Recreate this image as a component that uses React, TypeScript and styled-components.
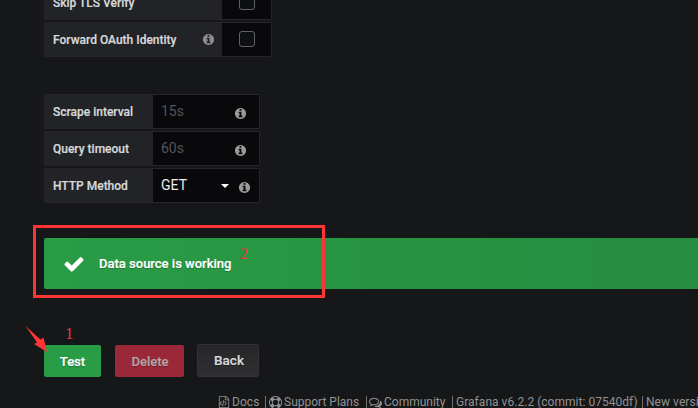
import React from 'react';
import styled, { createGlobalStyle, css } from 'styled-components';

const GlobalStyle = createGlobalStyle`
  html, body { margin: 0; background: #161719; overflow: hidden; }
  *, *::before, *::after { box-sizing: border-box; }
  body { font: 400 13px/20px Roboto, "Liberation Sans", sans-serif; color: #d8d9da; }
`;

const icons = {
  info: 'M1152 1376v-160q0-14-9-23t-23-9h-96v-512q0-14-9-23t-23-9h-320q-14 0-23 9t-9 23v160q0 14 9 23t23 9h96v320h-96q-14 0-23 9t-9 23v160q0 14 9 23t23 9h448q14 0 23-9t9-23zm-128-896v-160q0-14-9-23t-23-9h-192q-14 0-23 9t-9 23v160q0 14 9 23t23 9h192q14 0 23-9t9-23zm640 416q0 209-103 385.5t-279.5 279.5-385.5 103-385.5-103-279.5-279.5-103-385.5 103-385.5 279.5-279.5 385.5-103 385.5 103 279.5 279.5 103 385.5z',
  check: 'M1671 566q0 40-28 68l-724 724-136 136q-28 28-68 28t-68-28l-136-136-362-362q-28-28-28-68t28-68l136-136q28-28 68-28t68 28l294 295 656-657q28-28 68-28t68 28l136 136q28 28 28 68z',
  docs: 'M1596 380q28 28 48 76t20 88v1152q0 40-28 68t-68 28h-1344q-40 0-68-28t-28-68v-1600q0-40 28-68t68-28h896q40 0 88 20t76 48zm-444-244v376h376q-10-29-22-41l-313-313q-12-12-41-22zm384 1528v-1024h-416q-40 0-68-28t-28-68v-416h-768v1536h1280zm-1056-896q8-11 21-12.5t24 6.5l51 38q11 8 12.5 21t-6.5 24l-182 243 182 243q8 11 6.5 24t-12.5 21l-51 38q-11 8-24 6.5t-21-12.5l-226-301q-14-19 0-38zm802 301q14 19 0 38l-226 301q-8 11-21 12.5t-24-6.5l-51-38q-11-8-12.5-21t6.5-24l182-243-182-243q-8-11-6.5-24t12.5-21l51-38q11-8 24-6.5t21 12.5zm-620 461q-13-2-20.5-13t-5.5-24l138-831q2-13 13-20.5t24-5.5l63 10q13 2 20.5 13t5.5 24l-138 831q-2 13-13 20.5t-24 5.5z',
  support: 'M896 0q182 0 348 71t286 191 191 286 71 348-71 348-191 286-286 191-348 71-348-71-286-191-191-286-71-348 71-348 191-286 286-191 348-71zm0 128q-190 0-361 90l194 194q82-28 167-28t167 28l194-194q-171-90-361-90zm-678 1129l194-194q-28-82-28-167t28-167l-194-194q-90 171-90 361t90 361zm678 407q190 0 361-90l-194-194q-82 28-167 28t-167-28l-194 194q171 90 361 90zm0-384q159 0 271.5-112.5t112.5-271.5-112.5-271.5-271.5-112.5-271.5 112.5-112.5 271.5 112.5 271.5 271.5 112.5zm484-217l194 194q90-171 90-361t-90-361l-194 194q28 82 28 167t-28 167z',
  community: 'M704 384q-153 0-286 52t-211.5 141-78.5 191q0 82 53 158t149 132l97 56-35 84q34-20 62-39l44-31 53 10q78 14 153 14 153 0 286-52t211.5-141 78.5-191-78.5-191-211.5-141-286-52zm0-128q191 0 353.5 68.5t256.5 186.5 94 257-94 257-256.5 186.5-353.5 68.5q-86 0-176-16-124 88-278 128-36 9-86 16h-3q-11 0-20.5-8t-11.5-21q-1-3-1-6.5t.5-6.5 2-6l2.5-5 3.5-5.5 4-5 4.5-5 4-4.5q5-6 23-25t26-29.5 22.5-29 25-38.5 20.5-44q-124-72-195-177t-71-224q0-139 94-257t256.5-186.5 353.5-68.5zm822 1169q10 24 20.5 44t25 38.5 22.5 29 26 29.5 23 25q1 1 4 4.5t4.5 5 4 5 3.5 5.5l2.5 5 2 6 .5 6.5-1 6.5q-3 14-13 22t-22 7q-50-7-86-16-154-40-278-128-90 16-176 16-271 0-472-132 58 4 88 4 161 0 309-45t264-129q125-92 192-212t67-254q0-77-23-152 129 71 204 178t75 230q0 120-71 224.5t-195 176.5z',
};

const IconSvg = styled.svg<{ $size: number }>`
  display: block;
  flex: none;
  width: ${p => p.$size}px;
  height: ${p => p.$size}px;
  fill: currentColor;
`;

const Icon = ({ name, size }: { name: keyof typeof icons; size: number }) => (
  <IconSvg $size={size} viewBox="0 0 1792 1792" aria-hidden="true"><path d={icons[name]} /></IconSvg>
);

const Page = styled.main`
  position: relative;
  width: 698px;
  height: 408px;
  overflow: hidden;
  display: flex;
  flex-direction: column;
  background: #161719;
  white-space: nowrap;
`;

const FieldGroup = styled.section<{ $top: number }>`
  display: flex;
  flex-direction: column;
  flex: none;
  gap: 2px;
  margin: ${p => p.$top}px 0 0 44px;
`;

const Field = styled.div`
  display: flex;
  height: 35px;
`;

const Label = styled.label<{ $width: number }>`
  display: flex;
  align-items: center;
  justify-content: space-between;
  width: ${p => p.$width}px;
  padding: 0 7px 0 8px;
  border: 1px solid #262628;
  border-right: 0;
  border-radius: 2px 0 0 2px;
  background: #212327;
  font-size: 12px;
  font-weight: 500;
  -webkit-text-stroke: 0.2px currentColor;
  svg { color: #8e8e8e; }
`;

const Control = styled.div<{ $width: number; $center?: boolean }>`
  display: flex;
  align-items: center;
  justify-content: ${p => (p.$center ? 'center' : 'flex-start')};
  width: ${p => p.$width}px;
  padding-left: ${p => (p.$center ? 0 : 8)}px;
  border: 1px solid #262628;
  border-left: 0;
  border-radius: 0 2px 2px 0;
  background: #09090b;
  font-size: 14px;
`;

const Checkbox = styled.span`
  width: 16px;
  height: 16px;
  margin-bottom: 1px;
  border: 1px solid #626366;
  border-radius: 3px;
  background: #0e0f10;
`;

const Value = styled.span<{ $muted?: boolean }>`
  flex: 1;
  margin-bottom: 1px;
  color: ${p => (p.$muted ? '#52545c' : '#ececec')};
`;

const Hint = styled.span<{ $right: number }>`
  margin: 3px ${p => p.$right}px 0 0;
  color: #9b9b9b;
`;

const Caret = styled.span`
  margin-right: 9px;
  border: 4px solid transparent;
  border-top-color: #fff;
  border-bottom: 0;
`;

const Alert = styled.div`
  display: flex;
  align-items: center;
  flex: none;
  height: 51px;
  margin: 35px 0 0 44px;
  padding-left: 19px;
  gap: 14px;
  border-radius: 2px 0 0 2px;
  background: linear-gradient(90deg, #299c46, #268c40);
  color: #fff;
  font-weight: 500;
  -webkit-text-stroke: 0.2px currentColor;
  text-shadow: 0 1px 1px rgba(0, 0, 0, 0.25);
`;

const Actions = styled.div`
  display: flex;
  align-items: flex-end;
  flex: none;
  height: 33px;
  margin: 55px 0 0 44px;
`;

const variants = {
  primary: css`width: 57px; padding-top: 2px; margin-right: 14px; background: #299c46; color: #fff;`,
  danger: css`width: 69px; padding: 2px 0 0 1px; margin-right: 13px; background: #9b2839; color: #b6a4a8;`,
  neutral: css`width: 62px; height: 33px; padding: 0 0 2px 2px; border: 1px solid #343437; background: linear-gradient(#262628, #303033); color: #d8d9da; font-size: 13.5px;`,
};

const Button = styled.button<{ $variant: keyof typeof variants }>`
  height: 32px;
  padding: 0;
  border: 0;
  border-radius: 2px;
  font: 500 13px/30px Roboto, sans-serif;
  -webkit-text-stroke: 0.2px currentColor;
  text-shadow: 0 1px 1px rgba(0, 0, 0, 0.3);
  ${p => variants[p.$variant]}
`;

const Footer = styled.footer`
  display: flex;
  align-items: center;
  flex: none;
  height: 20px;
  margin: 15px 0 0 218px;
  color: #929292;
  font-size: 12px;
`;

const FooterItem = styled.span<{ $width: number; $spacing?: number }>`
  display: flex;
  align-items: center;
  flex: none;
  gap: 2px;
  width: ${p => p.$width}px;
  letter-spacing: ${p => p.$spacing ?? 0}px;
`;

const Divider = styled.i<{ $after?: number }>`
  flex: none;
  width: 1px;
  height: 13px;
  margin-right: ${p => p.$after ?? 3}px;
  background: #77716c;
`;

const Highlight = styled.div`
  position: absolute;
  left: 33px;
  top: 225px;
  width: 292px;
  height: 73px;
  border: 3px solid #ff3434;
`;

const Marker = styled.span<{ $x: number; $y: number }>`
  position: absolute;
  left: ${p => p.$x}px;
  top: ${p => p.$y}px;
  color: #e03a3a;
  font: 17px/20px "Liberation Serif", serif;
`;

const Arrow = styled.svg`
  position: absolute;
  left: 25px;
  top: 325px;
  width: 24px;
  height: 29px;
`;

export default function App() {
  return (
    <>
      <GlobalStyle />
      <Page>
        <FieldGroup $top={-15}>
          <Field>
            <Label $width={178}>Skip TLS Verify</Label>
            <Control $width={50} $center><Checkbox /></Control>
          </Field>
          <Field>
            <Label $width={178}>Forward OAuth Identity<Icon name="info" size={13} /></Label>
            <Control $width={50} $center><Checkbox /></Control>
          </Field>
        </FieldGroup>

        <FieldGroup $top={37}>
          <Field>
            <Label $width={109}>Scrape interval</Label>
            <Control $width={107}><Value $muted>15s</Value><Hint $right={12}><Icon name="info" size={13} /></Hint></Control>
          </Field>
          <Field>
            <Label $width={109}>Query timeout</Label>
            <Control $width={107}><Value $muted>60s</Value><Hint $right={12}><Icon name="info" size={13} /></Hint></Control>
          </Field>
          <Field>
            <Label $width={109}>HTTP Method</Label>
            <Control $width={107}><Value>GET</Value><Caret /><Hint $right={8}><Icon name="info" size={13} /></Hint></Control>
          </Field>
        </FieldGroup>

        <Alert><Icon name="check" size={22} />Data source is working</Alert>

        <Actions>
          <Button $variant="primary">Test</Button>
          <Button $variant="danger">Delete</Button>
          <Button $variant="neutral">Back</Button>
        </Actions>

        <Footer>
          <FooterItem $width={47} $spacing={0.05}><Icon name="docs" size={12} />Docs</FooterItem>
          <Divider />
          <FooterItem $width={97}><Icon name="support" size={13} />Support Plans</FooterItem>
          <Divider $after={2} />
          <FooterItem $width={83}><Icon name="community" size={13} />Community</FooterItem>
          <Divider />
          <FooterItem $width={186} $spacing={0.03}>Grafana v6.2.2 (commit: 07540df)</FooterItem>
          <Divider />
          <FooterItem $width={160} $spacing={0.05}>New version available!</FooterItem>
        </Footer>

        <Highlight />
        <Marker $x={240} $y={244}>2</Marker>
        <Marker $x={65} $y={324}>1</Marker>
        <Arrow viewBox="0 0 24 29" fill="#ff3434"><path d="M0.5 1L15.5 14.5L18.5 12.5L22 27L9 19L12 17.5Z" /></Arrow>
      </Page>
    </>
  );
}
